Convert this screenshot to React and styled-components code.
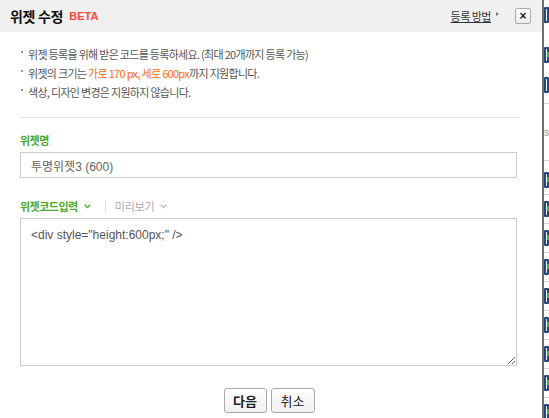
import React from "react";
import styled, { createGlobalStyle } from "styled-components";

const GlobalStyle = createGlobalStyle`
  html, body {
    margin: 0;
    padding: 0;
    background: #fff;
  }
  body {
    font-family: "Noto Sans CJK KR", "Noto Sans", sans-serif;
    overflow: hidden;
  }
`;

const Page = styled.div`
  display: flex;
  width: 549px;
  height: 418px;
  overflow: hidden;
`;

const Popup = styled.div`
  width: 542px;
  flex-shrink: 0;
  background: #fff;
  display: flex;
  flex-direction: column;
`;

const Divider = styled.div`
  width: 2px;
  flex-shrink: 0;
  background: #6f6f6f;
`;

const BackStrip = styled.div`
  flex: 1;
  background: #fff;
  display: flex;
  flex-direction: column;
  overflow: hidden;
`;

const StripRow = styled.div`
  height: ${(p) => p.$h}px;
  flex-shrink: 0;
  display: flex;
  align-items: center;
  border-bottom: ${(p) => (p.$line ? "1px solid #d4d4d4" : "none")};
  font-size: 10px;
  color: #999;
  font-family: "Liberation Sans", sans-serif;
`;

const CheckBox = styled.span`
  display: block;
  width: 12px;
  height: 12px;
  border: 2px solid #25477a;
  border-radius: 1px;
  position: relative;
  &::after {
    content: "";
    display: ${(p) => (p.$on ? "block" : "none")};
    position: absolute;
    left: 1px;
    top: 3px;
    width: 2px;
    height: 5px;
    background: #3fae3a;
  }
`;

const Header = styled.div`
  height: 32px;
  background: #f0f0f0;
  display: flex;
  align-items: center;
  padding: 0 11px 0 10px;
`;

const Title = styled.h1`
  margin: 0;
  font-size: 14px;
  font-weight: 700;
  color: #111;
  letter-spacing: -0.3px;
`;

const Beta = styled.span`
  margin-left: 6px;
  font-family: "Liberation Sans", sans-serif;
  font-size: 11px;
  font-weight: 700;
  color: #ff4a3a;
`;

const HeaderRight = styled.div`
  margin-left: auto;
  display: flex;
  align-items: center;
`;

const HelpLink = styled.a`
  font-size: 11px;
  color: #333;
  text-decoration: underline;
  letter-spacing: -0.5px;
  cursor: pointer;
`;

const Caret = styled.span`
  width: 0;
  height: 0;
  margin-left: 5px;
  margin-top: -4px;
  border-top: 2.5px solid transparent;
  border-bottom: 2.5px solid transparent;
  border-left: 3px solid #777;
`;

const CloseButton = styled.button`
  margin-left: 16px;
  width: 16px;
  height: 16px;
  padding: 0;
  border: 1px solid #aaa;
  border-radius: 2px;
  background: linear-gradient(#fff, #ececec);
  font-family: "Liberation Sans", sans-serif;
  font-size: 12px;
  font-weight: 700;
  line-height: 13px;
  color: #222;
  cursor: pointer;
`;

const Body = styled.div`
  padding: 13px 22px 0 20px;
  display: flex;
  flex-direction: column;
`;

const Notice = styled.ul`
  list-style: none;
  margin: 0;
  padding: 0 0 15px;
  border-bottom: 1px solid #e6e6e6;
`;

const NoticeItem = styled.li`
  position: relative;
  padding-left: 8px;
  font-size: 11px;
  line-height: 19px;
  color: #555;
  letter-spacing: -0.7px;
  &::before {
    content: "";
    position: absolute;
    left: 1px;
    top: 6px;
    width: 2px;
    height: 2px;
    background: #999;
  }
`;

const Accent = styled.span`
  color: #ff6a13;
`;

const Label = styled.div`
  margin-top: ${(p) => p.$top}px;
  display: flex;
  align-items: center;
  height: 16px;
  font-size: 11px;
  font-weight: 700;
  color: #4ea82a;
  letter-spacing: -0.5px;
`;

const Tab = styled.span`
  display: flex;
  align-items: center;
  font-weight: ${(p) => (p.$active ? 700 : 400)};
  color: ${(p) => (p.$active ? "#4ea82a" : "#aaa")};
  letter-spacing: ${(p) => (p.$active ? "-0.5px" : "-0.2px")};
`;

const Chevron = styled.svg`
  margin-left: 6px;
  width: 7px;
  height: 5px;
`;

const TabBar = styled.span`
  width: 1px;
  height: 13px;
  background: #ddd;
  margin: 0 9px 0 14px;
`;

const TextInput = styled.input`
  margin-top: 4px;
  box-sizing: border-box;
  width: 497px;
  height: 26px;
  border: 1px solid #ccc;
  padding: 0 10px;
  font-family: "Liberation Sans", "Noto Sans CJK KR", sans-serif;
  font-size: 12px;
  color: #666;
  outline: none;
`;

const CodeArea = styled.textarea`
  margin-top: 4px;
  box-sizing: border-box;
  width: 497px;
  height: 148px;
  border: 1px solid #ccc;
  padding: 8px 10px;
  font-family: "Liberation Sans", sans-serif;
  font-size: 12px;
  line-height: 16px;
  color: #555;
  outline: none;
  resize: vertical;
`;

const Actions = styled.div`
  margin-top: 22px;
  display: flex;
  justify-content: center;
  gap: 4px;
  padding-right: 2px;
`;

const ActionButton = styled.button`
  height: 25px;
  width: ${(p) => p.$w}px;
  padding: 0;
  border: 1px solid #aaa;
  border-radius: 3px;
  background: linear-gradient(#fff, #f0f0f0);
  font-family: "Noto Sans CJK KR", sans-serif;
  font-size: 13px;
  font-weight: ${(p) => (p.$primary ? 700 : 400)};
  color: #222;
  cursor: pointer;
`;

const stripRows = [
  { h: 6 },
  { h: 17, box: true },
  { h: 25 },
  { h: 13, box: true, on: true },
  { h: 16 },
  { h: 15, box: true },
  { h: 11, line: true },
  { h: 56, text: "s", line: true },
  { h: 5 },
  ...Array.from({ length: 9 }, (_, i) => ({ h: 28, box: true, on: true, line: i < 8 })),
];

function Chev({ color }) {
  return (
    <Chevron viewBox="0 0 7 5">
      <path d="M0.8 0.8 L3.5 3.6 L6.2 0.8" fill="none" stroke={color} strokeWidth="1.3" />
    </Chevron>
  );
}

export default function App() {
  return (
    <Page>
      <GlobalStyle />
      <Popup>
        <Header>
          <Title>위젯 수정</Title>
          <Beta>BETA</Beta>
          <HeaderRight>
            <HelpLink>등록 방법</HelpLink>
            <Caret />
            <CloseButton aria-label="닫기">×</CloseButton>
          </HeaderRight>
        </Header>
        <Body>
          <Notice>
            <NoticeItem>위젯 등록을 위해 받은 코드를 등록하세요. (최대 20개까지 등록 가능)</NoticeItem>
            <NoticeItem>
              위젯의 크기는 <Accent>가로 170 px, 세로 600px</Accent>까지 지원합니다.
            </NoticeItem>
            <NoticeItem>색상, 디자인 변경은 지원하지 않습니다.</NoticeItem>
          </Notice>

          <Label $top={14}>위젯명</Label>
          <TextInput defaultValue="투명위젯3 (600)" />

          <Label $top={20}>
            <Tab $active>
              위젯코드입력
              <Chev color="#4ea82a" />
            </Tab>
            <TabBar />
            <Tab>
              미리보기
              <Chev color="#bbb" />
            </Tab>
          </Label>
          <CodeArea defaultValue={'<div style="height:600px;" />'} />

          <Actions>
            <ActionButton $primary $w={43}>다음</ActionButton>
            <ActionButton $w={44}>취소</ActionButton>
          </Actions>
        </Body>
      </Popup>
      <Divider />
      <BackStrip>
        {stripRows.map((r, i) => (
          <StripRow key={i} $h={r.h} $line={r.line}>
            {r.box && <CheckBox $on={r.on} />}
            {r.text}
          </StripRow>
        ))}
      </BackStrip>
    </Page>
  );
}
